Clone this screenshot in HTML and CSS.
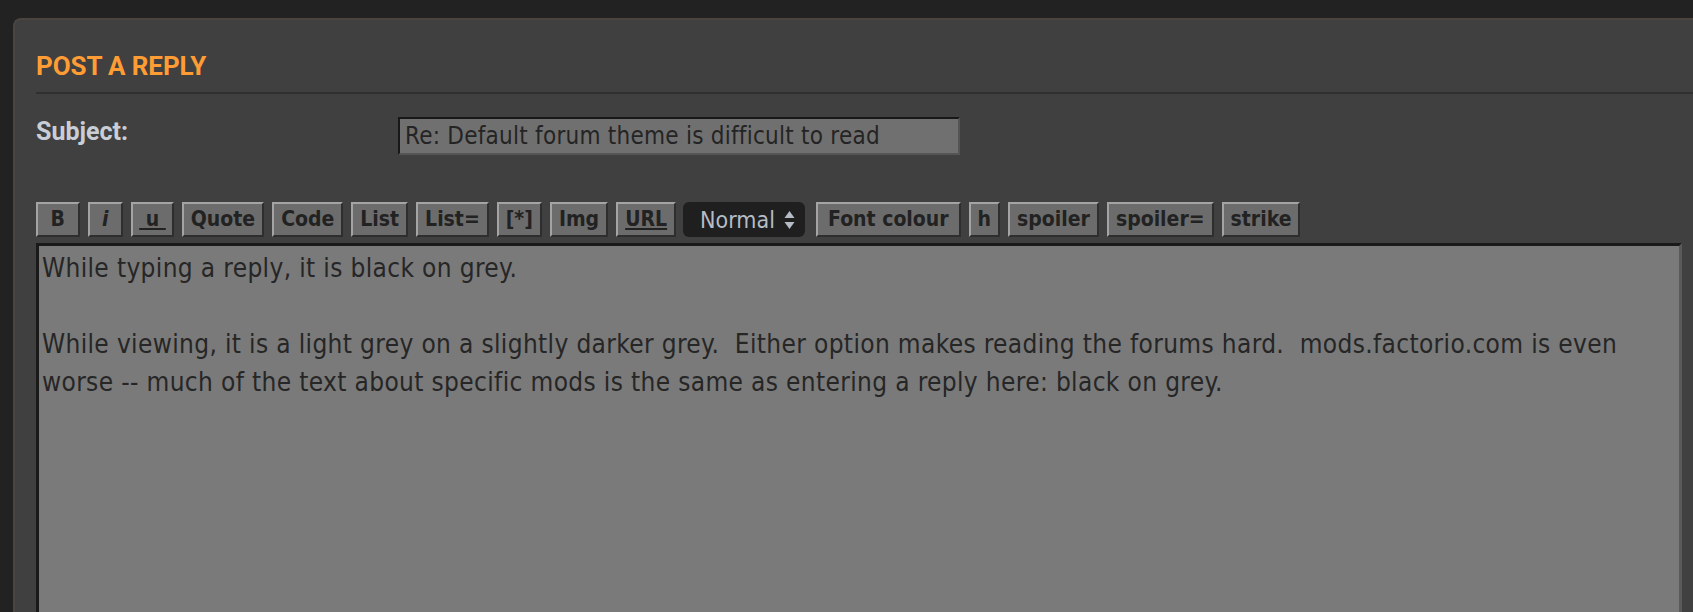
FILE: index.html
```html
<!DOCTYPE html>
<html lang="en">
<head>
  <meta charset="UTF-8" />
  <title>Post a reply</title>
  <link rel="stylesheet" href="styles.css">
</head>
<body>
  <div class="panel">
    <h2 class="panel-title">POST A REPLY</h2>

    <div class="subject-row">
      <label class="subject-label" for="subject">Subject:</label>
      <input type="text" id="subject" class="subject-input" value="Re: Default forum theme is difficult to read" />
    </div>

    <div class="toolbar">
      <button class="bb-btn bb-short">&nbsp;B&nbsp;</button>
      <button class="bb-btn bb-short bb-i">&nbsp;i&nbsp;</button>
      <button class="bb-btn bb-short bb-u">&nbsp;u&nbsp;</button>
      <button class="bb-btn">Quote</button>
      <button class="bb-btn">Code</button>
      <button class="bb-btn">List</button>
      <button class="bb-btn">List=</button>
      <button class="bb-btn">[*]</button>
      <button class="bb-btn">Img</button>
      <button class="bb-btn bb-url">URL</button>
      <div class="size-select">
        <span>Normal</span>
        <svg class="size-arrows" width="11" height="20" viewBox="0 0 11 20">
          <path d="M5.5 1 L10.5 8 L0.5 8 Z" fill="#b5bcc6"/>
          <path d="M5.5 19 L10.5 12 L0.5 12 Z" fill="#b5bcc6"/>
        </svg>
      </div>
      <button class="bb-btn bb-wide">Font colour</button>
      <button class="bb-btn">h</button>
      <button class="bb-btn">spoiler</button>
      <button class="bb-btn">spoiler=</button>
      <button class="bb-btn">strike</button>
    </div>

    <textarea class="message">While typing a reply, it is black on grey.

While viewing, it is a light grey on a slightly darker grey.  Either option makes reading the forums hard.  mods.factorio.com is even worse -- much of the text about specific mods is the same as entering a reply here: black on grey.</textarea>
  </div>
</body>
</html>
```

FILE: styles.css
```css
:root {
  --page-bg: #222222;
  --panel-bg: #404040;
  --panel-edge: #4b4541;
  --accent: #ff9d34;
  --label: #c9ced6;
  --field-bg: #7a7a7a;
  --field-text: #262626;
  --btn-bg: #6c6c6c;
}

html, body {
  margin: 0;
  padding: 0;
  overflow: hidden;
}

body {
  background: var(--page-bg);
  width: 1693px;
  height: 612px;
}

.panel {
  margin: 18px 0 0 13px;
  width: 1740px;
  height: 700px;
  background: var(--panel-bg);
  border-top: 2px solid var(--panel-edge);
  border-left: 2px solid var(--panel-edge);
  border-radius: 8px 0 0 0;
  padding: 0 0 0 21px;
  box-sizing: border-box;
}

.panel-title {
  margin: 0;
  padding: 30px 0 10px 0;
  font-family: Roboto, sans-serif;
  font-weight: 700;
  font-size: 26px;
  line-height: 32px;
  letter-spacing: -0.1px;
  color: var(--accent);
  border-bottom: 2px solid #2f2f2f;
}

.subject-row {
  display: flex;
  align-items: flex-start;
  padding-top: 24px;
  height: 86px;
  box-sizing: border-box;
}

.subject-label {
  width: 362px;
  font-family: Roboto, sans-serif;
  font-weight: 700;
  font-size: 25px;
  line-height: 28px;
  color: var(--label);
}

.subject-input {
  width: 562px;
  height: 38px;
  margin-top: -1px;
  box-sizing: border-box;
  background: #707070;
  border: 2px solid;
  border-color: #181818 #555 #555 #181818;
  color: #242424;
  font-family: "DejaVu Sans Condensed", "DejaVu Sans", sans-serif;
  font-size: 24px;
  letter-spacing: 0.25px;
  padding: 0 5px;
  outline: none;
}

.toolbar {
  display: flex;
  align-items: center;
  gap: 8px;
  margin-top: 22px;
  height: 35px;
}

.bb-btn {
  height: 35px;
  padding: 0 7px;
  background: var(--btn-bg);
  border: 2px solid;
  border-color: #a4a4a4 #2e2e2e #2e2e2e #a4a4a4;
  color: #222;
  font-family: "DejaVu Sans Condensed", "DejaVu Sans", sans-serif;
  font-weight: 700;
  font-size: 21px;
  line-height: 1;
  cursor: pointer;
  white-space: pre;
}

.bb-short {
  padding: 0 6px;
}

.bb-wide {
  padding: 0 10px;
}

.bb-i {
  font-style: italic;
}

.bb-u,
.bb-url {
  text-decoration: underline;
}

.size-select {
  display: flex;
  align-items: center;
  gap: 9px;
  height: 35px;
  width: 122px;
  box-sizing: border-box;
  padding-left: 17px;
  background: #1f1f1f;
  border-radius: 6px;
  color: #b5bcc6;
  font-family: "DejaVu Sans Condensed", "DejaVu Sans", sans-serif;
  font-size: 23px;
  margin: 0 3px 0 -1px;
}

.message {
  display: block;
  margin-top: 6px;
  width: 1646px;
  height: 420px;
  box-sizing: border-box;
  background: var(--field-bg);
  border: 3px solid;
  border-color: #1a1a1a #5a5a5a #5a5a5a #1a1a1a;
  color: var(--field-text);
  font-family: "DejaVu Sans Condensed", "DejaVu Sans", sans-serif;
  font-size: 26px;
  letter-spacing: 0.35px;
  line-height: 38px;
  padding: 3px 3px;
  resize: none;
  outline: none;
}
```
